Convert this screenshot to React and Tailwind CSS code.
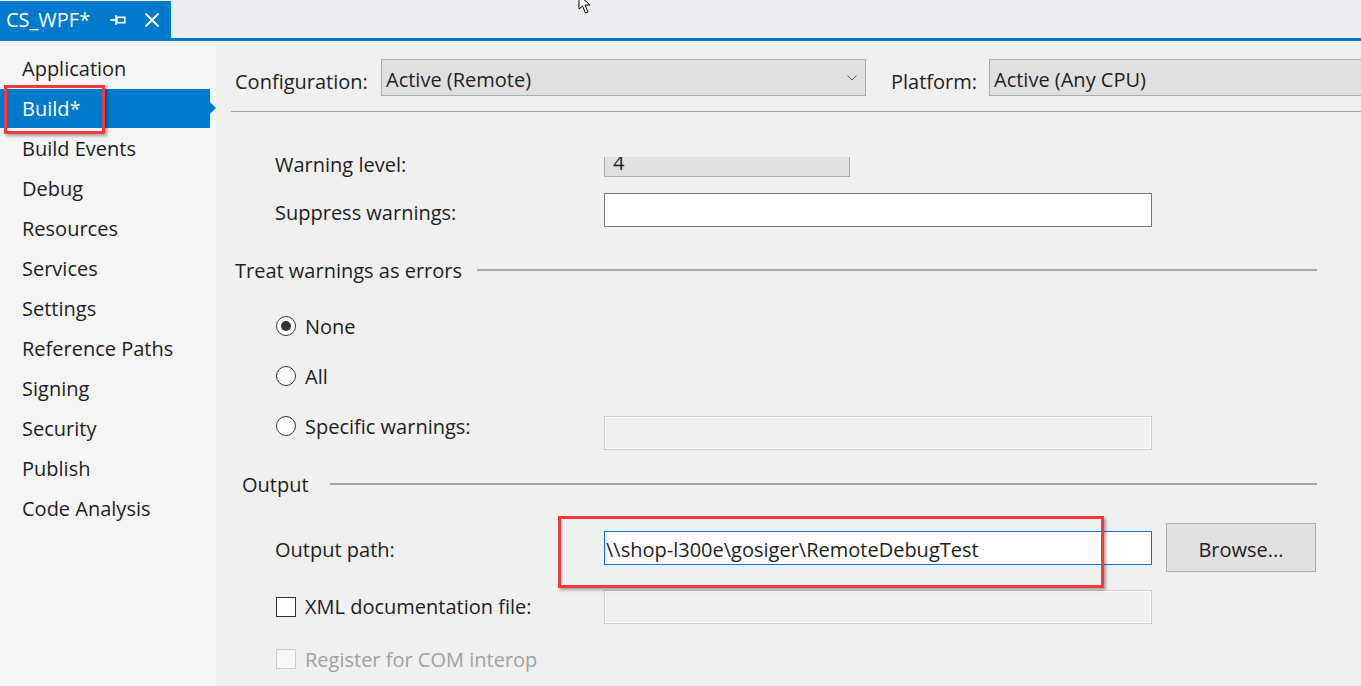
import React from "react";

const items = [
  "Application",
  "Build*",
  "Build Events",
  "Debug",
  "Resources",
  "Services",
  "Settings",
  "Reference Paths",
  "Signing",
  "Security",
  "Publish",
  "Code Analysis",
];

function Radio({ checked }) {
  return (
    <div className="w-[20px] h-[20px] rounded-full border border-[#333333] bg-white flex items-center justify-center shrink-0">
      {checked && <div className="w-[10px] h-[10px] rounded-full bg-[#333333]" />}
    </div>
  );
}

function GroupHeader({ label, pl, gap }) {
  return (
    <div className={`h-[34px] flex items-center ${pl} pr-[44px]`}>
      <span className="whitespace-nowrap pt-[2px]">{label}</span>
      <div className={`flex-1 h-[2px] bg-[#A5A5A5] ${gap}`} />
    </div>
  );
}

export default function App() {
  return (
    <div className="w-[1361px] h-[686px] overflow-hidden relative bg-[#F0F0F0] text-[#1E1E1E] font-['Segoe_UI','Open_Sans',sans-serif] text-[20px] leading-none">
      {/* Tab strip */}
      <div className="h-[38px] bg-[#EEEEF2] flex items-end">
        <div className="h-[37px] w-[171px] bg-[#007ACC] flex items-center text-white pl-[6px]">
          <span className="text-[20px]">CS_WPF*</span>
          <svg className="ml-[20px]" width="16" height="12" viewBox="0 0 16 12">
            <path d="M0 6 H6" stroke="white" strokeWidth="1.6" fill="none" />
            <path d="M6 1 V11" stroke="white" strokeWidth="1.6" fill="none" />
            <rect x="6.8" y="3.3" width="8" height="5.4" stroke="white" strokeWidth="1.6" fill="none" />
          </svg>
          <svg className="ml-[18px]" width="16" height="16" viewBox="0 0 16 16">
            <path d="M1.5 1.5 L14.5 14.5 M14.5 1.5 L1.5 14.5" stroke="white" strokeWidth="2" fill="none" />
          </svg>
        </div>
      </div>
      <div className="h-[3px] bg-[#007ACC]" />

      <div className="flex h-[645px]">
        {/* Sidebar */}
        <div className="w-[216px] bg-[#F5F5F5] pt-[8px] shrink-0">
          {items.map((it) =>
            it === "Build*" ? (
              <div key={it} className="relative h-[40px] w-[210px]">
                <div className="absolute left-0 top-0 w-[210px] h-[39px] bg-[#007ACC] text-white flex items-center pl-[22px]">
                  {it}
                </div>
                <div className="absolute left-[210px] top-[13px] w-0 h-0 border-y-[6px] border-y-transparent border-l-[6px] border-l-[#007ACC]" />
                <div className="absolute left-[4px] top-[-4px] w-[101px] h-[49px] border-[3px] border-[#F23A3A] shadow-[2px_2px_3px_rgba(0,0,0,0.35)]" />
              </div>
            ) : (
              <div key={it} className="h-[40px] flex items-center pl-[22px]">
                {it}
              </div>
            )
          )}
        </div>

        {/* Main */}
        <div className="flex-1 min-w-0">
          <div className="pt-[18px] pl-[19px] flex items-center">
            <div className="w-[146px] shrink-0 pt-[8px]">Configuration:</div>
            <div className="w-[485px] h-[37px] bg-[#E0E0E0] border border-[#ACACAC] flex items-center pl-[4px] pr-[8px] shrink-0">
              <span className="flex-1 pt-[5px]">Active (Remote)</span>
              <svg width="10" height="6" viewBox="0 0 10 6">
                <path d="M0.5 0.5 L5 5 L9.5 0.5" stroke="#555" strokeWidth="1" fill="none" />
              </svg>
            </div>
            <div className="w-[123px] pl-[25px] shrink-0 pt-[8px]">Platform:</div>
            <div className="w-[420px] h-[37px] bg-[#E0E0E0] border border-[#ACACAC] flex items-center pl-[4px] shrink-0">
              <span className="pt-[5px]">Active (Any CPU)</span>
            </div>
          </div>
          <div className="mt-[15px] ml-[15px] h-[1px] bg-[#A0A0A0]" />

          {/* Scrolled content */}
          <div className="mt-[45px] h-[528px] overflow-hidden">
            <div className="-mt-[14px]">
              {/* Warning level */}
              <div className="h-[34px] flex items-center pl-[59px]">
                <div className="w-[329px] shrink-0 pt-[9px]">Warning level:</div>
                <div className="w-[246px] h-[34px] bg-[#E0E0E0] border border-[#ACACAC] flex items-center pl-[8px]">
                  <span className="pt-[5px]">4</span>
                </div>
              </div>
              {/* Suppress warnings */}
              <div className="mt-[16px] h-[34px] flex items-center pl-[59px]">
                <div className="w-[329px] shrink-0 pt-[5px]">Suppress warnings:</div>
                <div className="w-[548px] h-[34px] bg-white border border-[#7A7A7A]" />
              </div>
              {/* Treat warnings as errors */}
              <div className="mt-[26px]">
                <GroupHeader label="Treat warnings as errors" pl="pl-[19px]" gap="ml-[15px]" />
              </div>
              <div className="mt-[22px] h-[34px] flex items-center pl-[60px]">
                <Radio checked />
                <span className="ml-[9px] pt-[2px]">None</span>
              </div>
              <div className="mt-[16px] h-[34px] flex items-center pl-[60px]">
                <Radio />
                <span className="ml-[9px] pt-[2px]">All</span>
              </div>
              <div className="mt-[23px] h-[34px] flex items-start pl-[60px]">
                <div className="w-[328px] shrink-0 h-[20px] flex items-center">
                  <Radio />
                  <span className="ml-[9px] pt-[2px]">Specific warnings:</span>
                </div>
                <div className="w-[548px] h-[34px] bg-[#F0F0F0] border border-[#CCCCCC] shadow-[inset_0_0_0_1px_#FFFFFF]" />
              </div>
              {/* Output */}
              <div className="mt-[17px]">
                <GroupHeader label="Output" pl="pl-[26px]" gap="ml-[21px]" />
              </div>
              <div className="mt-[22px] h-[49px] flex items-center pl-[59px]">
                <div className="w-[329px] shrink-0 pt-[5px]">Output path:</div>
                <div className="relative w-[548px] h-[34px] bg-white border border-[#0078D7] flex items-center pl-[1px]">
                  <span className="pt-[5px]">\\shop-l300e\gosiger\RemoteDebugTest</span>
                  <div className="absolute left-[-47px] top-[-16px] w-[546px] h-[72px] border-[3px] border-[#F23A3A] shadow-[2px_2px_3px_rgba(0,0,0,0.35)]" />
                </div>
                <div className="ml-[14px] w-[150px] h-[49px] bg-[#E1E1E1] border border-[#ADADAD] flex items-center justify-center">
                  <span className="pt-[5px]">Browse...</span>
                </div>
              </div>
              <div className="mt-[18px] h-[34px] flex items-center pl-[60px]">
                <div className="w-[328px] shrink-0 flex items-center">
                  <div className="w-[20px] h-[20px] border-[1.5px] border-[#333333] bg-white shrink-0" />
                  <span className="ml-[9px]">XML documentation file:</span>
                </div>
                <div className="w-[548px] h-[34px] bg-[#F0F0F0] border border-[#CCCCCC] shadow-[inset_0_0_0_1px_#FFFFFF]" />
              </div>
              <div className="mt-[18px] h-[34px] flex items-center pl-[60px] text-[#A0A0A0]">
                <div className="w-[20px] h-[20px] border border-[#CCCCCC] bg-[#F7F7F7] shrink-0" />
                <span className="ml-[9px] pt-[2px]">Register for COM interop</span>
              </div>
            </div>
          </div>
        </div>
      </div>

      {/* Mouse cursor */}
      <svg className="absolute left-[578px] top-[-6px]" width="20" height="22" viewBox="0 0 20 22">
        <path d="M1 1 L1 15 L4.5 12 L7.5 19 L10 18 L7 11 L12 11 Z" fill="white" stroke="black" strokeWidth="1" strokeLinejoin="round" />
      </svg>
    </div>
  );
}
